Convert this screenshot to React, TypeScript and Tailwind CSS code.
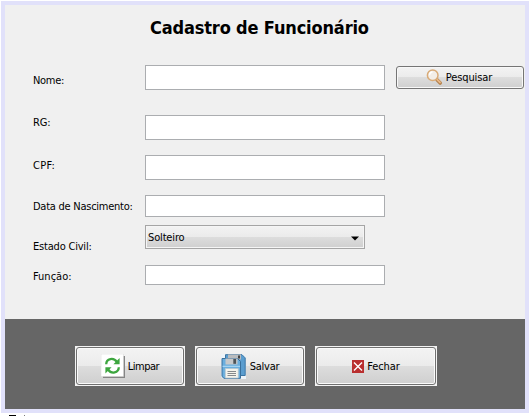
import React from 'react';

const labels = [
  { text: 'Nome:', box: 'mt-5', spacing: 'tracking-[-0.3px]' },
  { text: 'RG:', box: 'mt-7', spacing: 'tracking-[-0.1px]' },
  { text: 'CPF:', box: 'mt-[29px]', spacing: 'tracking-[0.3px]' },
  { text: 'Data de Nascimento:', box: 'mt-[27px]', spacing: 'tracking-[-0.25px]' },
  { text: 'Estado Civil:', box: 'mt-[26px]', spacing: 'tracking-[-0.2px]' },
  { text: 'Função:', box: 'mt-4', spacing: 'tracking-[0px]' },
];

function Field({ size, label }: { size: string; label: string }) {
  return (
    <input
      aria-label={label}
      className={`block w-60 border border-[#abadb0] bg-white px-1 outline-none ${size}`}
    />
  );
}

function SearchIcon() {
  return (
    <svg width="17" height="17" viewBox="0 0 17 17" className="shrink-0">
      <path d="M11 10.8l3.2 3.2" stroke="#b5834f" strokeWidth="3.6" strokeLinecap="round" />
      <path d="M11 10.4l3 3" stroke="#ebb987" strokeWidth="1.8" strokeLinecap="round" />
      <circle cx="6.7" cy="6.2" r="5.3" fill="#f3eee8" stroke="#d9ab78" strokeWidth="1.5" />
      <path d="M3.5 6.2a3.3 3.3 0 0 1 3-3.2" fill="none" stroke="#fff" strokeWidth="1.3" />
    </svg>
  );
}

function RefreshIcon() {
  return (
    <svg width="24" height="24" viewBox="0 0 24 24" className="shrink-0">
      <path d="M2 2h22v22H2z" fill="#858585" />
      <path d="M0 0h22.5v22.5H0z" fill="#fff" stroke="#d5d5d5" strokeWidth=".5" />
      <g fill="none" stroke="#3da63f" strokeWidth="2.3">
        <path d="M5.2 10.2C5.4 4.6 12.5 3 16 8" />
        <path d="M17.8 13.3C17.6 18.9 10.5 20.5 7 15.5" />
      </g>
      <path d="M18.6 4v6.2h-6.2zM4.4 19.5v-6.2h6.2z" fill="#3da63f" />
    </svg>
  );
}

function DisksIcon() {
  return (
    <svg width="25" height="25" viewBox="0 0 25 25" className="shrink-0">
      <path d="M0 0h22l3 3v22H2l-2-2z" fill="#edf3f8" />
      <path d="M4.5.7H21l3.2 3.2v17.6H4.5z" fill="#5a9dcf" stroke="#3a74a3" />
      <path d="M7 .5h13v5H7z" fill="#b9bbbd" />
      <path d="M17 1.5h2v3h-2z" fill="#444" />
      <path d="M1 4.5h15.5l3 3v16.8H3L1 22.5z" fill="#6aaede" stroke="#386f9c" />
      <path d="M4.5 4.5h12v6h-12z" fill="#c6c8ca" />
      <path d="M12.3 5h2.8v4.8h-2.8z" fill="#4c5358" />
      <path d="M1.5 12.3h17.5" stroke="#b4dcf5" />
      <path d="M4.3 14.5h13V24h-13z" fill="#f5f3eb" stroke="#b6c6cf" strokeWidth=".7" />
      <path d="M6.5 17.5h8.5M6.5 19.5h8.5M6.5 21.5h8.5" stroke="#85898c" />
    </svg>
  );
}

function CloseIcon() {
  return (
    <svg width="12" height="13" viewBox="0 0 12 13" className="shrink-0">
      <path d="M0 0h12v13H0z" fill="#b92f2f" />
      <path d="M2 2.5l8 8M10 2.5l-8 8" stroke="#fff" strokeWidth="1.4" />
    </svg>
  );
}

function ActionButton({ size, icon, text }: { size: string; icon: React.ReactNode; text: React.ReactNode }) {
  return (
    <button className={`h-10 bg-[#f3f3f3] p-px ${size}`}>
      <span className="flex h-full items-center justify-center rounded-[3px] border border-[#707070] bg-[linear-gradient(#f3f3f3,#ebebeb_50%,#dddddd_50%,#cfcfcf)] shadow-[inset_0_0_0_1px_#fafafa]">
        {icon}
        {text}
      </span>
    </button>
  );
}

export default function App() {
  return (
    <div className="h-[416px] w-[531px] overflow-hidden bg-white pt-px pl-px font-['DejaVu_Sans_Condensed','DejaVu_Sans',sans-serif] text-[11px] leading-[14px] text-black [font-stretch:condensed]">
      <main className="h-[412px] w-[528px] border-4 border-[#e1e1fa]">
        <section className="h-[314px] bg-[#f0f0f0] pt-2.5">
          <h1 className="ml-[145px] h-[26px] text-[18px] leading-[26px] font-bold tracking-[-0.15px] whitespace-nowrap">
            Cadastro de Funcionário
          </h1>
          <div className="flex pt-[13px] pl-7">
            <div className="flex w-28 flex-col">
              {labels.map((l) => (
                <label key={l.text} className={`block h-3.5 whitespace-nowrap ${l.box} ${l.spacing}`}>
                  {l.text}
                </label>
              ))}
            </div>
            <div className="w-60 pt-[11px]">
              <Field size="h-[25px]" label="Nome" />
              <Field size="mt-[25px] h-[25px]" label="RG" />
              <Field size="mt-[15px] h-[25px]" label="CPF" />
              <Field size="mt-[15px] h-[22px]" label="Data de Nascimento" />
              <button className="mt-2 flex h-6 w-[220px] items-center justify-between border border-[#a5a5a5] bg-[linear-gradient(#f3f3f3,#ebebeb_50%,#dddddd_50%,#cfcfcf)] pr-[5px] pl-0.5 shadow-[inset_0_0_0_1px_#f5f5f5]">
                <span className="pt-0.5 tracking-[-0.15px]">Solteiro</span>
                <svg width="8" height="5" viewBox="0 0 8 5" className="mt-0.5">
                  <path d="M0 .5h8L4 4.5z" fill="#000" />
                </svg>
              </button>
              <Field size="mt-4 h-5" label="Função" />
            </div>
            <button className="mt-3 ml-[11px] flex h-[23px] w-32 items-center justify-center rounded-[3px] border border-[#757575] bg-[linear-gradient(#f3f3f3,#ebebeb_50%,#dddddd_50%,#cfcfcf)] pr-0.5 shadow-[inset_0_0_0_1px_#f8f8f8]">
              <SearchIcon />
              <span className="ml-[3px] tracking-[-0.1px]">Pesquisar</span>
            </button>
          </div>
        </section>
        <footer className="flex h-[90px] gap-2.5 bg-[#666] pt-[27px] pl-[70px]">
          <ActionButton
            size="w-[110px]"
            icon={<RefreshIcon />}
            text={<span className="ml-[3px] pt-0.5 tracking-[-0.5px]">Limpar</span>}
          />
          <ActionButton
            size="w-[110px]"
            icon={<DisksIcon />}
            text={<span className="ml-1 pt-0.5 tracking-[-0.25px]">Salvar</span>}
          />
          <ActionButton
            size="w-[122px]"
            icon={<CloseIcon />}
            text={<span className="ml-[3px] pt-0.5 tracking-[-0.1px]">Fechar</span>}
          />
        </footer>
      </main>
      <div className="flex h-[3px] items-end pl-2">
        <i className="h-px w-[7px] bg-black" />
        <i className="ml-2 h-px w-px bg-[#777]" />
      </div>
    </div>
  );
}
